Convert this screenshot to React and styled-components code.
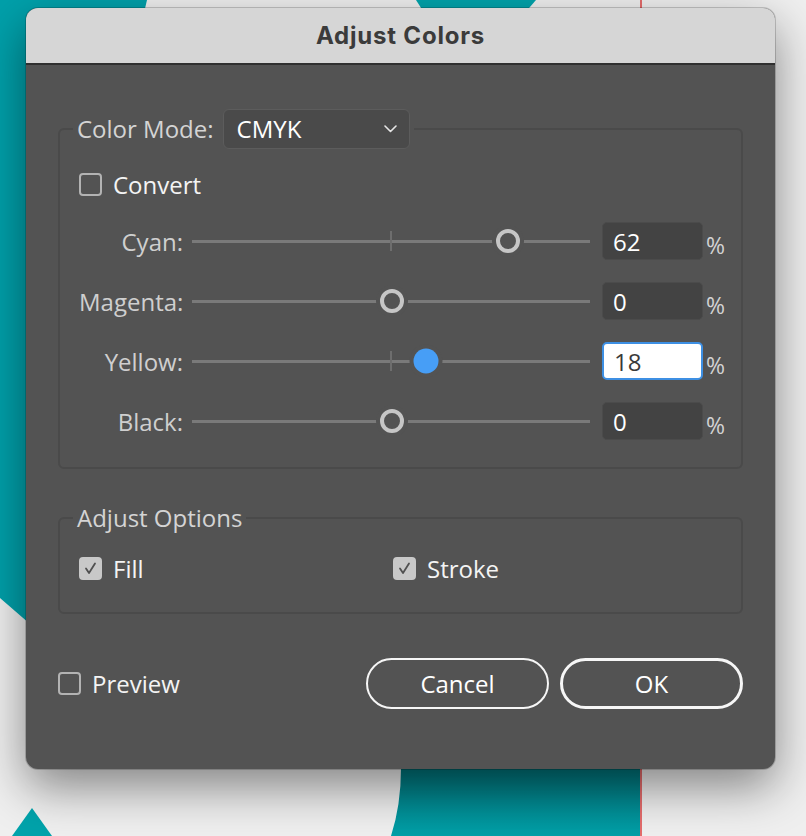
import React from "react";
import styled, { createGlobalStyle } from "styled-components";

const GlobalStyle = createGlobalStyle`
  html, body { margin: 0; padding: 0; background: #efefef; }
  body { font-family: "Open Sans", "Noto Sans", sans-serif; }
  * { box-sizing: border-box; }
`;

const Stage = styled.div`
  position: relative;
  width: 806px;
  height: 836px;
  overflow: hidden;
  padding: 8px 0 0 26px;
  background: #efefef;
`;

const Backdrop = styled.svg`
  position: absolute;
  left: 0;
  top: 0;
  width: 806px;
  height: 836px;
`;

const Dialog = styled.div`
  position: relative;
  width: 749px;
  height: 761px;
  border-radius: 12px;
  overflow: hidden;
  display: flex;
  flex-direction: column;
  background: #535353;
  box-shadow: 0 0 0 1px rgba(0, 0, 0, 0.18), 0 18px 48px rgba(0, 0, 0, 0.45);
`;

const TitleBar = styled.div`
  height: 57px;
  flex: none;
  display: flex;
  align-items: center;
  justify-content: center;
  background: #d6d6d6;
  border-bottom: 2px solid #303030;
`;

const Title = styled.h1`
  margin: 0;
  font-family: Inter, "Liberation Sans", sans-serif;
  font-weight: 700;
  font-size: 24px;
  letter-spacing: 0.8px;
  color: #3b3b3b;
`;

const Body = styled.div`
  flex: 1;
  display: flex;
  flex-direction: column;
  padding: 44px 32px 0 32px;
`;

const Group = styled.fieldset`
  margin: ${(p) => p.$mt || 0}px 0 0 0;
  padding: 0;
  border: 2px solid #4a4a4a;
  border-radius: 6px;
  min-width: 0;
`;

const Legend = styled.legend`
  margin-left: 13px;
  padding: 0 4px;
  display: flex;
  align-items: center;
  gap: 9px;
  font-size: 24px;
  line-height: 32px;
  color: #d4d4d4;
`;

const Select = styled.div`
  width: 187px;
  height: 40px;
  display: flex;
  align-items: center;
  justify-content: space-between;
  padding: 0 12px 0 13px;
  border-radius: 6px;
  background: #4a4a4a;
  border: 1px solid #5c5c5c;
  color: #ffffff;
  font-size: 24px;
`;

const GroupContent = styled.div`
  display: flex;
  flex-direction: column;
  padding: ${(p) => p.$pt}px 0 ${(p) => p.$pb}px 19px;
`;

const CheckRow = styled.label`
  display: flex;
  align-items: center;
  gap: 11px;
  height: 24px;
  font-size: 24px;
  color: #f4f4f4;
`;

const Box = styled.span`
  width: 23px;
  height: 23px;
  flex: none;
  border-radius: 4px;
  display: flex;
  align-items: center;
  justify-content: center;
  border: 2px solid ${(p) => (p.$checked ? "#c8c8c8" : "#b3b3b3")};
  background: ${(p) => (p.$checked ? "#c8c8c8" : "transparent")};
`;

const Sliders = styled.div`
  display: flex;
  flex-direction: column;
  gap: 22px;
  margin-top: 25px;
`;

const SliderRow = styled.div`
  display: grid;
  grid-template-columns: 104px 398px 104px auto;
  column-gap: 9px;
  align-items: center;
  height: 38px;
`;

const SliderLabel = styled.span`
  text-align: right;
  font-size: 24px;
  color: #cfcfcf;
`;

const Track = styled.div`
  position: relative;
  height: 3px;
  background: #7a7a7a;
`;

const Tick = styled.span`
  position: absolute;
  left: 50%;
  top: -9px;
  width: 2px;
  height: 20px;
  margin-left: -1px;
  background: #6e6e6e;
`;

const Thumb = styled.span`
  position: absolute;
  top: 50%;
  width: ${(p) => (p.$active ? 25 : 24)}px;
  height: ${(p) => (p.$active ? 25 : 24)}px;
  border-radius: 50%;
  transform: translate(-50%, -50%);
  background: ${(p) => (p.$active ? "#479ef6" : "#535353")};
  border: ${(p) => (p.$active ? "none" : "4px solid #c6c6c6")};
  box-shadow: 0 0 0 4px #535353;
`;

const ValueBox = styled.div`
  justify-self: end;
  width: 101px;
  height: 38px;
  display: flex;
  align-items: center;
  padding-left: 10px;
  border-radius: 5px;
  font-size: 24px;
  background: ${(p) => (p.$focused ? "#ffffff" : "#434343")};
  color: ${(p) => (p.$focused ? "#3a3a3a" : "#ffffff")};
  border: ${(p) => (p.$focused ? "2px solid #3d8fe3" : "1px solid #4b4b4b")};
`;

const Percent = styled.span`
  font-size: 23px;
  color: #d2d2d2;
  margin-left: -6px;
  padding-top: 8px;
`;

const OptionGrid = styled.div`
  display: grid;
  grid-template-columns: 314px auto;
`;

const Footer = styled.div`
  display: flex;
  align-items: center;
  justify-content: space-between;
  margin-top: 44px;
  height: 51px;
`;

const Buttons = styled.div`
  display: flex;
  gap: 11px;
`;

const Button = styled.button`
  width: 183px;
  height: 51px;
  flex: none;
  border-radius: 26px;
  background: transparent;
  color: #ffffff;
  font-family: "Open Sans", "Noto Sans", sans-serif;
  font-size: 24px;
  border: ${(p) => (p.$primary ? 3 : 2)}px solid #f6f6f6;
  padding: 0;
`;

function CheckBox({ checked, children }) {
  return (
    <CheckRow>
      <Box $checked={checked}>
        {checked && (
          <svg width="15" height="15" viewBox="0 0 15 15">
            <path d="M3 7.5 L6 12 L12 2.5" fill="none" stroke="#505050" strokeWidth="1.8" strokeLinecap="round" strokeLinejoin="round" />
          </svg>
        )}
      </Box>
      {children}
    </CheckRow>
  );
}

const sliders = [
  { name: "Cyan", value: "62", pos: 79.4, tick: true },
  { name: "Magenta", value: "0", pos: 50.2 },
  { name: "Yellow", value: "18", pos: 58.8, tick: true, active: true },
  { name: "Black", value: "0", pos: 50.2 },
];

export default function App() {
  return (
    <>
      <GlobalStyle />
      <Stage>
        <Backdrop viewBox="0 0 806 836">
          <defs>
            <linearGradient id="tealV" x1="0" y1="0" x2="0" y2="1">
              <stop offset="0" stopColor="#00737a" />
              <stop offset="1" stopColor="#00a0a8" />
            </linearGradient>
          </defs>
          <rect width="806" height="836" fill="#efefef" />
          <polygon points="0,0 147,0 140,30 60,620 30,624 0,598" fill="#00a0aa" />
          <polygon points="416,0 536,0 517,22 430,22" fill="#00a3ab" />
          <path d="M401,768 L640,768 L640,836 L391,836 Q401,805 401,768 Z" fill="url(#tealV)" />
          <polygon points="32,808 62,850 2,850" fill="#00a3ab" />
          <line x1="641" y1="0" x2="641" y2="836" stroke="#e04040" strokeWidth="1.5" />
        </Backdrop>
        <Dialog>
          <TitleBar>
            <Title>Adjust Colors</Title>
          </TitleBar>
          <Body>
            <Group>
              <Legend>
                Color Mode:
                <Select>
                  CMYK
                  <svg width="13" height="8" viewBox="0 0 13 8">
                    <polyline points="1,1 6.5,6.5 12,1" fill="none" stroke="#e6e6e6" strokeWidth="1.6" strokeLinecap="round" strokeLinejoin="round" />
                  </svg>
                </Select>
              </Legend>
              <GroupContent $pt={23} $pb={28}>
                <CheckBox>Convert</CheckBox>
                <Sliders>
                  {sliders.map((s) => (
                    <SliderRow key={s.name}>
                      <SliderLabel>{s.name}:</SliderLabel>
                      <Track>
                        {s.tick && <Tick />}
                        <Thumb $active={s.active} style={{ left: `${s.pos}%` }} />
                      </Track>
                      <ValueBox $focused={s.active}>{s.value}</ValueBox>
                      <Percent>%</Percent>
                    </SliderRow>
                  ))}
                </Sliders>
              </GroupContent>
            </Group>
            <Group $mt={33}>
              <Legend>Adjust Options</Legend>
              <GroupContent $pt={22} $pb={32}>
                <OptionGrid>
                  <CheckBox checked>Fill</CheckBox>
                  <CheckBox checked>Stroke</CheckBox>
                </OptionGrid>
              </GroupContent>
            </Group>
            <Footer>
              <CheckBox>Preview</CheckBox>
              <Buttons>
                <Button>Cancel</Button>
                <Button $primary>OK</Button>
              </Buttons>
            </Footer>
          </Body>
        </Dialog>
      </Stage>
    </>
  );
}
